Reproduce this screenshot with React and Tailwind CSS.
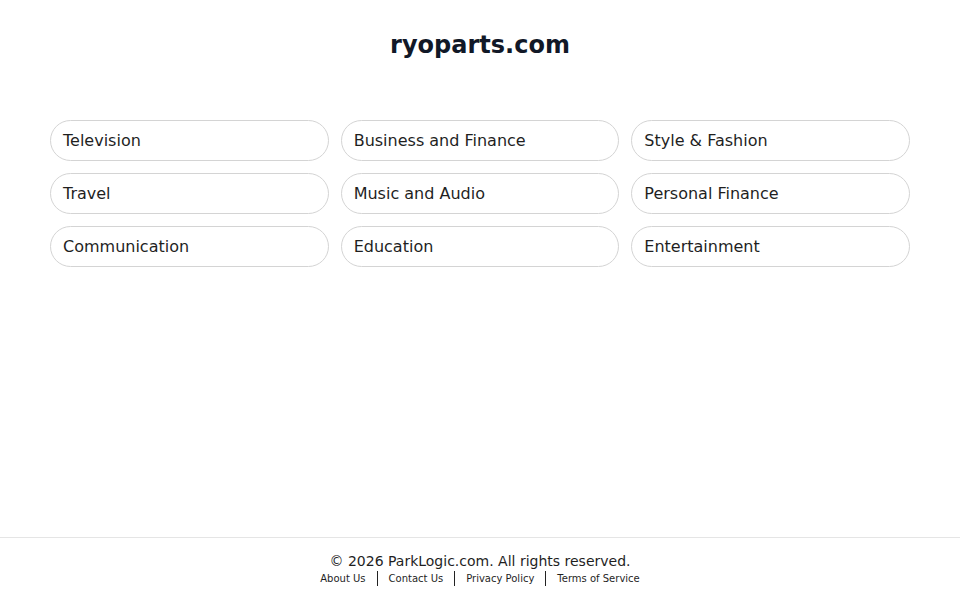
import React from 'react';

const topics = [
  'Television',
  'Business and Finance',
  'Style & Fashion',
  'Travel',
  'Music and Audio',
  'Personal Finance',
  'Communication',
  'Education',
  'Entertainment',
];

const links = ['About Us', 'Contact Us', 'Privacy Policy', 'Terms of Service'];

function App() {
  return (
    <div className="min-h-screen flex flex-col bg-white text-[#1f1f1f] font-['DejaVu_Sans',sans-serif]">
      <header className="h-[88px] flex items-center justify-center pt-[2px]">
        <h1 className="text-[24px] leading-[30px] font-bold text-[#111827]">ryoparts.com</h1>
      </header>

      <main className="flex-1 px-[50px] pt-[32px]">
        <div className="grid grid-cols-3 gap-[12px]">
          {topics.map((t) => (
            <a
              key={t}
              href="#"
              className="h-[41px] flex items-center px-[12px] rounded-full border border-[#d4d4d4] text-[16px] text-[#1f1f1f] bg-white"
            >
              {t}
            </a>
          ))}
        </div>
      </main>

      <footer className="border-t border-[#e5e5e5] pt-[15px] pb-[14px] flex flex-col items-center">
        <p className="text-[14px] leading-[17px] text-[#1f1f1f]">© 2026 ParkLogic.com. All rights reserved.</p>
        <nav className="mt-[1px] flex items-center text-[10px] leading-[15px] text-[#1f1f1f]">
          {links.map((l, i) => (
            <React.Fragment key={l}>
              {i > 0 && <span className="mx-[11px] h-[15px] border-l border-[#222]" />}
              <a href="#">{l}</a>
            </React.Fragment>
          ))}
        </nav>
      </footer>
    </div>
  );
}

export default App;
